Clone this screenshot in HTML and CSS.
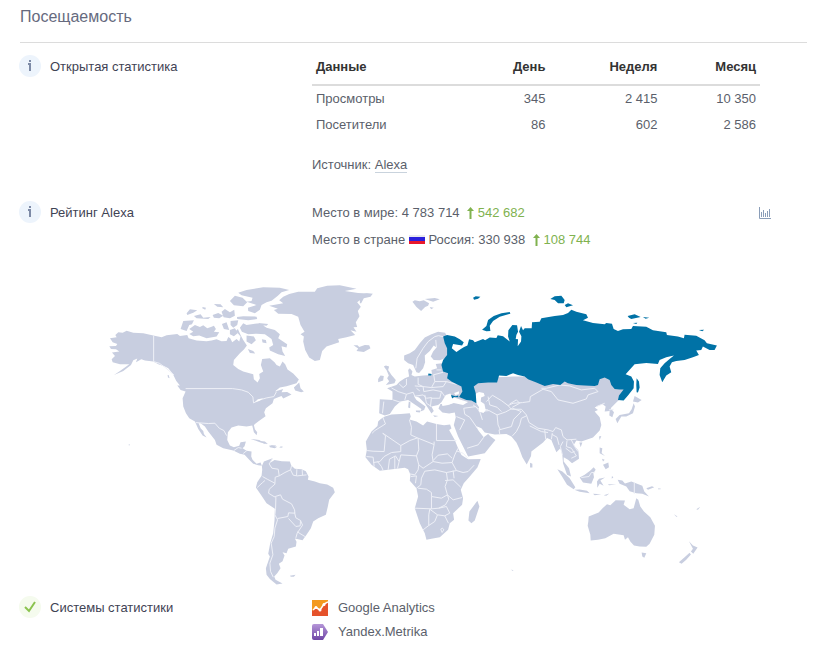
FILE: index.html
```html
<!DOCTYPE html>
<html lang="ru">

<head>
    <meta charset="utf-8">
    <title>Посещаемость</title>
    <link rel="stylesheet" href="styles.css">
</head>

<body>
    <section class="block">
        <h2 class="block_title">Посещаемость</h2>

        <div class="row">
            <div class="row_name">
                <svg class="status" viewBox="0 0 22 22"><circle cx="11" cy="11" r="11" fill="#edf4fc"/><path d="M10 5h2v2h-2zM9 8h3v8h-2V10H9z" fill="#7d8aa6"/></svg>
                <span>Открытая статистика</span>
            </div>
            <div class="row_data">
                <table class="stats">
                    <thead>
                        <tr>
                            <th>Данные</th>
                            <th>День</th>
                            <th>Неделя</th>
                            <th>Месяц</th>
                        </tr>
                    </thead>
                    <tbody>
                        <tr>
                            <td>Просмотры</td>
                            <td>345</td>
                            <td>2 415</td>
                            <td>10 350</td>
                        </tr>
                        <tr>
                            <td>Посетители</td>
                            <td>86</td>
                            <td>602</td>
                            <td>2 586</td>
                        </tr>
                    </tbody>
                </table>
                <p class="source">Источник: <a href="#">Alexa</a></p>
            </div>
        </div>

        <div class="row">
            <div class="row_name">
                <svg class="status" viewBox="0 0 22 22"><circle cx="11" cy="11" r="11" fill="#edf4fc"/><path d="M10 5h2v2h-2zM9 8h3v8h-2V10H9z" fill="#7d8aa6"/></svg>
                <span>Рейтинг Alexa</span>
            </div>
            <div class="row_data rating">
                <div class="places">
                    <p>Место в мире: 4 783 714 <span class="up"><svg class="arrow" viewBox="0 0 7 12"><path d="M3.500 0L7 4H4.500v8h-2V4H0z" fill="#80b24f"/></svg> 542 682</span></p>
                    <p>Место в стране <svg class="flag" viewBox="0 0 16 11"><path fill="#e9e9ee" d="M0 1h16v9H0z"/><path fill="#2a20dc" d="M0 3h16v4H0z"/><path fill="#e8182c" d="M0 7h16v3H0z"/></svg> Россия: 330 938 <span class="up"><svg class="arrow" viewBox="0 0 7 12"><path d="M3.500 0L7 4H4.500v8h-2V4H0z" fill="#80b24f"/></svg> 108 744</span></p>
                </div>
                <button class="chart_btn" type="button" aria-label="График">
                    <svg viewBox="0 0 12 12"><path d="M.5 0v11.500H12M2.500 5v5M4.500 3v7M6.500 6v4M8.500 4v6M10.500 2v8" fill="none" stroke="#8a9db8"/></svg>
                </button>
            </div>
        </div>

        <svg class="map" viewBox="99 280 630 310" role="img" aria-label="Карта мира">
            <!-- North America -->
            <g class="land" transform="translate(100 275) scale(.3333)">
                <path d="M30 190L50 187 46 180 55 172 68 173 80 167 100 173 130 175 160 182 185 187 200 181 232 177 240 183 262 180 266 190 290 197 320 199 335 197 350 193 365 199 380 198 385 186 391 190 397 202 410 192 418 200 422 185 408 168 414 162 422 180 430 195 441 212 432 224 420 235 402 255 400 270 415 282 430 290 460 298 462 313 473 323 480 310 478 297 490 290 483 270 487 252 510 250 524 262 530 270 540 275 548 260 556 268 563 284 580 296 597 314 590 325 560 334 540 338 525 350 540 345 550 342 545 352 562 351 575 359 550 371 545 363 533 368 522 372 518 385 498 400 493 412 497 424 475 440 462 450 465 463 472 472 470 481 462 472 457 452 440 455 415 452 395 458 384 472 382 495 390 512 402 517 418 513 422 502 438 500 434 514 428 520 440 528 455 530 454 545 458 555 470 567 482 563 486 573 475 571 460 567 448 555 434 540 420 537 400 527 370 520 350 510 345 495 325 470 315 455 302 445 296 444 302 460 310 468 312 477 320 488 308 482 295 462 285 440 268 430 258 415 250 395 248 370 257 350 242 345 232 332 240 332 229 318 218 296 205 280 195 275 175 268 160 260 135 257 124 253 108 262 112 251 100 256 93 270 70 288 42 300 60 288 88 268 60 268 38 262 35 253 45 243 36 233 58 230 48 223 33 222 28 214 48 213 52 207 38 202z"/>
                <path d="M242 162L250 138 282 136 276 148 268 150 260 168zM268 162L285 150 300 156 310 151 322 160 335 155 342 152 348 162 342 170 358 172 350 185 320 190 298 182 280 184 268 177 280 170zM260 115L270 103 292 106 280 113 262 120zM282 123L302 118 310 128 332 126 325 132 290 130zM308 96L318 98 316 104 307 100zM342 87L362 88 370 97 352 95zM338 120L355 114 370 122 358 130 342 128zM365 110L375 102 390 112 403 104 405 122 390 130 371 127zM366 147L380 142 388 165 372 162zM392 138L415 136 412 150 400 158 392 150zM390 165L405 160 414 174 402 184 390 178zM411 126L430 124 470 125 472 132 445 136 412 132zM390 78L405 62 428 68 442 82 430 94 402 91zM415 53L440 45 490 37 540 38 568 45 545 52 534 62 515 77 500 82 485 90 480 104 465 115 445 108 444 98 470 90 440 80 455 78 458 68 425 61z"/>
                <path d="M420 158L430 145 440 150 465 146 478 145 488 150 500 158 525 165 540 178 535 190 562 208 560 218 545 214 548 230 556 243 535 238 510 227 508 218 520 210 515 192 495 178 470 176 445 178 426 170zM440 182L462 185 468 196 455 208 440 200zM486 193L498 195 500 205 488 203zM444 222L460 228 466 236 450 234zM476 144L505 147 500 152 480 150zM582 338L598 323 602 340 612 350 604 352 586 347zM452 492L478 495 500 508 480 502zM508 512L532 516 525 520 510 517zM539 517h8v2h-8zM203 300L206 300 209 310 204 308zM86 509h4v2h-4z"/>
                <path class="border" d="M161 182V260L178 265 195 277 222 300M257 341H398L425 345 445 352 459 366 461 384 480 375 500 369 522 365 530 350M288 443L325 446 345 445 358 460 372 467 380 482M402 527L415 518 425 520M430 536L442 526"/>
                <path class="water" d="M465 381L474 373 490 370 478 378z"/>
            </g>

            <!-- Greenland, Iceland -->
            <g class="land" transform="translate(230 275) scale(.3333)">
                <path d="M118 92L160 85 148 76 160 65 178 57 205 50 255 50 262 40 292 32 330 31 380 41 345 48 385 54 430 56 400 68 382 82 393 95 384 108 389 124 378 142 382 156 371 157 380 170 362 166 376 180 350 187 325 192 328 202 290 215 277 228 270 255 255 258 238 248 226 225 220 200 222 185 212 178 224 170 212 150 205 125 185 117 145 116 132 105 144 101z"/>
                <path d="M371 211L383 211 388 216 405 210 418 211 422 220 402 231 380 228 385 221z"/>
            </g>

            <!-- South America -->
            <g class="land" transform="translate(240 440) scale(.3333)">
                <path d="M66 78L72 65 98 55 92 68 104 60 126 64 150 65 154 77 165 87 185 88 198 94 206 110 204 120 225 125 240 130 262 134 280 144 285 157 268 180 264 200 258 225 235 235 220 245 213 265 200 285 188 301 165 296 170 306 168 320 145 327 140 340 128 337 134 347 128 364 117 372 122 385 112 400 103 410 107 420 128 431 110 434 90 418 80 405 78 385 90 350 85 342 91 310 100 280 104 240 105 207 80 190 65 168 48 143 52 127 65 108 67 90z"/>
                <path d="M150 408L167 405 162 411 153 411zM60 3L75 5 84 12 72 11zM90 15L109 17 102 22zM121 20h7v2h-7z"/>
                <path class="border" d="M98 56L88 72 96 85 115 88 118 108 106 112 105 133 88 148 86 160 102 170 108 172 107 207 105 225 113 240 105 265 103 290 94 310 99 345 90 370 92 395 100 412M68 110L82 118 105 130M52 143L68 128 75 122M118 108L135 98 152 90 155 78M152 90L160 106 172 108 200 105M171 88L170 107M187 90L188 106M106 170L122 165 128 178 155 192 164 210 165 220 146 219 144 230 113 236M164 218L168 234 182 242 181 258 168 260 146 236M182 242L188 256 172 280 168 294M172 276L195 290"/>
            </g>

            <!-- Africa -->
            <g class="land" transform="translate(355 400) scale(.3333)">
                <path d="M78 57L90 50 110 44 138 42 165 40 168 50 164 59 185 65 205 77 217 65 245 72 268 76 286 74 290 86 283 90 300 120 310 145 320 165 340 178 378 177 368 203 345 230 327 250 318 270 325 295 322 315 295 340 298 360 285 370 280 390 255 412 230 417 215 420 210 400 195 370 180 325 190 290 185 265 165 243 167 225 160 208 150 204 125 207 100 210 75 213 50 195 32 172 36 150 33 125 50 95 68 78 70 65zM344 335L368 303 374 320 360 362 350 370 341 362z"/>
                <path class="border" d="M84 52L92 72 60 92 52 100M84 100L92 108 88 155 55 154 37 152M84 100L138 137 165 122 188 114 238 134V125M164 60L170 82 168 105 188 114M245 72V122H305M138 137L138 155 110 158 88 170 75 185 55 188M100 210L104 178 122 168 133 185 128 206M120 170V207M133 185L138 165 185 168 192 150 190 115M238 134L232 165 235 185 205 205 192 195 185 168M192 195L190 210 180 225 165 222M235 185L262 190 292 188 300 165 310 145M292 188L305 212 325 218 340 215 358 196M305 212L275 218 240 210 210 214 200 235 198 255 185 265M275 218L278 240 271 260 278 285 260 295 230 290 230 278 215 268 190 265M180 325L230 327 230 290M230 327L252 325 272 315 282 298 278 285 295 300 322 293M222 377V345L225 328 248 345 240 365 222 377 205 390M248 345L270 348 281 370M252 325L275 320 285 340 270 348M271 242L295 240 318 262M295 212L298 235M168 230L185 228 182 250M258 388L263 385 267 390 262 398z"/>
                <path class="border" d="M35 170L55 172 58 200M68 185L80 200 85 212M235 182L250 166 278 162 292 175M305 153L325 160 340 176"/>
            </g>

            <!-- Europe -->
            <g class="land" transform="translate(360 285) scale(.3333)">
                <path d="M0 30L20 25 38 27 32 35 12 40 4 55 0 55zM158 50L165 46 180 49 192 46 208 55 205 62 196 66 184 78 170 66zM195 42L225 39 240 43 220 50zM210 66L222 68 214 73z"/>
                <path d="M133 212L150 205 165 195 180 175 195 158 215 148 235 140 256 143 262 155 280 200 262 218 240 226 222 225 213 215 220 200 230 188 222 182 210 198 195 212 196 232 190 250 178 264 170 262 160 240 145 235 133 225z"/>
                <path d="M270 232L228 237 232 250 215 255 217 270 190 272 165 275 155 270 158 260 150 250 145 255 148 275 135 280 120 290 110 300 82 310 98 320 98 345 60 343 58 385 75 392 90 387 105 365 122 350 145 345 165 359 185 372 182 380 193 375 197 365 170 345 162 333 178 338 195 355 205 370 215 386 222 378 215 365 235 360 245 352 300 350 330 330 320 260z"/>
                <path d="M80 255L72 245 78 242 88 245 85 255 95 270 108 285 104 295 78 300 88 289 82 280 87 272zM55 282L62 272 72 273 70 287 55 292zM168 377L182 377 180 383 169 381zM147 350L152 352 151 370 145 368zM220 391L236 393 225 396z"/>
            </g>

            <!-- Asia -->
            <g class="land" transform="translate(480 380) scale(.3333)">
                <path d="M-62 60L-90 73 -118 72 -124 86 -112 98 -92 101 -75 98 -72 112 -78 135 -65 170 -50 200 -35 230 15 220 27 205 47 180 32 169 25 162 12 172 -3 153 -12 138 5 145 15 158 45 164 80 162 95 170 110 188 118 205 128 232 141 254 154 228 155 215 190 188 202 174 215 180 225 205 230 217 242 205 248 225 250 250 262 285 274 290 268 265 252 245 252 232 265 240 277 250 298 237 296 212 282 195 290 182 305 185 340 173 360 152 365 135 360 112 345 95 355 90 345 83 368 72 378 80 375 95 390 93 389 107 398 112 403 97 393 85 410 68 440 40 430 10 390 -20 300 -10 100 -10 -40 -5z"/>
                <path d="M408 117L420 105 448 100 456 88 462 70 466 80 460 100 440 110 425 110 413 130zM460 65L465 48 478 56 486 60 475 68zM299 188L308 188 303 202zM358 170L365 168 360 180zM151 249L158 252 158 263 151 263zM360 203L368 205 366 219 376 228 360 220zM370 255L386 248 388 262 378 268zM367 237L375 240 370 245z"/>
                <path d="M233 268L248 275 270 295 287 322 282 328 262 315 247 290zM284 330L300 329 322 333 330 340 300 336zM300 293L315 285 332 272 342 262 348 270 341 280 343 292 335 312 310 308zM352 305L358 297 376 293 362 302 372 318 360 312 353 324zM397 288L401 294 396 296zM385 313L410 314 388 316zM340 342L365 343 345 346zM372 346L389 341 380 348zM414 300L428 302 436 311 455 305 488 318 494 335 508 350 488 342 470 340 450 334 440 320 420 312zM500 325L517 319 524 322 505 330z"/>
                <path d="M327 410L357 398 368 386 382 373 392 376 408 361 436 362 432 375 450 388 462 385 470 355 476 360 482 380 493 395 512 412 526 438 524 465 510 492 500 501 480 500 463 497 452 485 445 472 436 480 432 466 402 462 377 475 355 480 333 482 332 465 324 438 326 424zM486 518L500 520 494 534 488 530zM628 484L640 497 654 503 641 522 634 515 640 507zM598 547L620 528 630 519 634 524 620 540 606 552zM583 403L594 410 590 411zM650 388L662 381 655 390zM95 569L102 572 97 573zM535 326h8v2h-8z"/>
                <path class="border" d="M20 65L38 46 65 62 85 77 100 70 128 68 150 65 152 50 190 28 215 35 235 60 280 70 320 57 325 45 355 35 345 25 305 30 270 18 240 15 200 25 185 25M0 95L28 92 52 105 78 96 98 85 125 95 102 118 95 140 58 150 60 163M52 105L55 135 62 150M85 77L95 88 125 88 140 105 148 128 175 145 205 150 220 155 228 143 245 150 250 170 262 180 290 178M98 168L110 155 120 135 125 115 140 108M150 138L185 155 205 158M195 150L198 178M218 160L215 178M248 225L242 200 250 185M262 182L260 200 275 205 290 228 275 235M275 180L285 200 295 215M350 80L375 70M388 90L402 88M-45 103L-30 112 -5 148M-70 110L-45 120 -60 150M-45 103L-48 85 -12 80 0 95 8 120M-20 75L-5 86 25 90M12 172L-5 195 -38 205M464 307V342M305 293L328 290 335 278 345 278"/>
                <path class="border" d="M25 50L30 75 52 82 65 95M90 72L110 60 120 70 98 82M258 205L275 218 285 215M216 163L232 172 238 195"/>
            </g>

            <!-- Russia, inland seas, borders of Europe -->
            <g class="land" transform="translate(360 285) scale(.3333)">
                <path class="border" d="M168 250L172 220 190 190 205 170 225 155 236 152 255 156M230 188L228 165M95 309L115 320 140 328 135 345M118 297L130 308 140 300 140 282M140 328L160 322 165 334 190 330 200 340 215 338 212 365M175 278L175 298 190 305 215 308 225 290 222 270M165 303L190 305M190 305L192 320 220 315 245 320 255 335M215 308L250 305 260 290 290 298M230 255L245 255M220 270L250 262M245 320L240 340 215 340M195 330L200 355 215 365M72 350L68 385M100 345L122 352M225 290L260 290M170 310L180 318"/>
                <path class="water" d="M245 352L258 330 272 326 276 336 290 340 305 345 325 351 310 360 282 354 265 360 248 363zM283 324L298 319 297 328 287 330zM346 327L358 321 372 324 375 333 364 338 363 350 374 357 378 376 371 384 357 380 358 367 350 355 345 342z"/>
                <path class="active" d="M250 155L262 150 285 155 300 163 312 172 307 182 280 177 276 190 290 201 302 193 313 186 323 182 328 163 340 166 345 172 370 162 376 166 390 158 410 159 414 151 430 154 450 170 445 155 446 136 458 120 472 121 475 140 470 150 468 162 475 163 474 184 484 170 485 154 478 140 484 123 490 136 495 130 516 130 517 112 540 110 545 100 585 93 610 90 625 84 635 74 650 80 680 88 685 98 670 106 700 114 735 118 740 114 757 116 762 132 775 138 790 133 815 132 820 123 860 125 880 136 920 142 922 150 955 155 973 160 975 149 1010 152 1035 166 1042 175 1072 182 1065 195 1050 195 1030 185 1025 195 1010 197 1018 210 1000 217 975 225 950 228 937 232 930 245 935 262 920 272 908 292 900 270 902 250 915 235 930 222 943 212 920 217 900 225 895 237 860 234 825 238 798 268 815 275 823 290 822 310 805 332 792 347 775 345 778 332 792 314 780 314 765 312 755 300 750 285 735 278 720 283 715 300 705 303 675 302 650 300 625 295 615 290 602 300 580 297 555 303 530 293 505 283 495 275 475 270 460 265 440 273 418 272 412 293 385 293 355 295 342 305 348 325 350 355 335 347 320 345 298 336 308 320 305 305 290 297 275 290 262 280 265 265 250 260 245 240 250 225 262 210 262 190 255 175z"/>
                <path class="active" d="M367 134L380 123 385 105 402 93 425 85 450 81 452 86 420 95 400 108 390 122 392 138 380 139zM340 38L348 34 362 35 355 41 343 44zM572 42L585 34 605 32 615 45 612 55 595 55 585 45zM615 60L625 55 640 61 620 67zM804 93L825 88 843 96 815 102 808 98zM850 96L869 98 858 101zM820 114L833 113 830 117zM1018 135L1034 134 1028 139zM831 280L838 290 840 308 835 323 831 322 830 300zM206 266L216 267 214 272 205 272zM274 330L288 334 295 332 296 337 283 336 277 341z"/>
            </g>
        </svg>

        <div class="row">
            <div class="row_name">
                <svg class="status" viewBox="0 0 22 22"><circle cx="11" cy="11" r="11" fill="#f5fbee"/><path d="M6 11l4 4 6-9" fill="none" stroke="#8bc34f" stroke-width="2"/></svg>
                <span>Системы статистики</span>
            </div>
            <ul class="row_data systems">
                <li>
                    <svg viewBox="0 0 16 16"><path fill="#f39a1f" d="M0 0h16v16H0z"/><path fill="#e5522b" d="M0 11l4-3 4 3 5-7 3-2v14H0z"/><path d="M1 10l3-2.500L8 10l4-6 4-2" fill="none" stroke="#fff" stroke-width="1.500"/><g fill="#fff"><circle cx="4" cy="7.500" r="1.500"/><circle cx="8" cy="10" r="1.500"/><circle cx="12" cy="4.500" r="1.500"/></g></svg>
                    Google Analytics
                </li>
                <li>
                    <svg viewBox="0 0 16 16"><defs><linearGradient id="metrika" x2="0" y2="1"><stop stop-color="#b596d8"/><stop offset="1" stop-color="#7047a6"/></linearGradient></defs><path d="M2 0h9l5 8-5 8H2q-2 0-2-2V2q0-2 2-2z" fill="url(#metrika)"/><path d="M2 9h2v3H2zM5 7h2v5H5zM8 4h3v8H8z" fill="#fff"/></svg>
                    Yandex.Metrika
                </li>
            </ul>
        </div>
    </section>
</body>

</html>
```
FILE: styles.css
```css
body {
    margin: 0;
    background-color: #fff;
    color: #5b5f6b;
    font-family: "Liberation Sans", Arial, sans-serif;
    font-size: 13px;
    line-height: 20px;
}

p,
ul {
    margin: 0;
    padding: 0;
}

.block {
    padding: 5px 22px 0 20px;
}

.block_title {
    margin: 0 0 12px;
    padding: 0 0 13px;
    border-bottom: 1px solid #dcdcdc;
    color: #666a7e;
    font-size: 16px;
    font-weight: 400;
    line-height: 24px;
}

.row {
    display: grid;
    grid-template-columns: 292px 1fr;
}

.row_name {
    display: flex;
    align-items: flex-start;
    gap: 9px;
    color: #3f4354;
    line-height: 24px;
}

.status {
    width: 22px;
    height: 22px;
    margin-left: -1px;
}

.stats {
    width: calc(100% - 47px);
    border-collapse: collapse;
}

.stats th,
.stats td {
    width: 25%;
    height: 26px;
    padding: 0 4px;
    text-align: right;
}

.stats th {
    height: 24px;
    padding-bottom: 5px;
    border-bottom: 2px solid #dcdcdc;
    color: #333;
}

.stats th:first-child,
.stats td:first-child {
    width: 28%;
    text-align: left;
}

.stats th:last-child {
    width: 22%;
}

.source {
    padding: 17px 0 26px;
}

.source a {
    border-bottom: 1px solid #c9d3dd;
    color: inherit;
    text-decoration: none;
}

.rating {
    display: flex;
    justify-content: space-between;
    align-items: flex-start;
    padding-right: 36px;
}

.places {
    display: grid;
    gap: 3px;
    line-height: 24px;
}

.up {
    margin-left: 4px;
    color: #80b24f;
}

.arrow {
    width: 7px;
    height: 12px;
    vertical-align: -2px;
}

.flag {
    width: 16px;
    height: 11px;
    vertical-align: -1px;
}

.chart_btn {
    padding: 0;
    border: 0;
    background: none;
}

.chart_btn svg {
    display: block;
    width: 12px;
    height: 12px;
    margin-top: 6px;
}

.map {
    display: block;
    width: 80%;
    margin: 28px auto 6px;
}

.land {
    fill: #c8cee0;
}

.border {
    fill: none;
    stroke: #eef0f7;
    stroke-width: 3px;
}

.water {
    fill: #fff;
}

.active {
    fill: #0072a6;
}

.systems {
    list-style: none;
    line-height: 24px;
}

.systems li {
    display: flex;
    align-items: center;
    gap: 10px;
}

.systems svg {
    width: 16px;
    height: 16px;
}
```
